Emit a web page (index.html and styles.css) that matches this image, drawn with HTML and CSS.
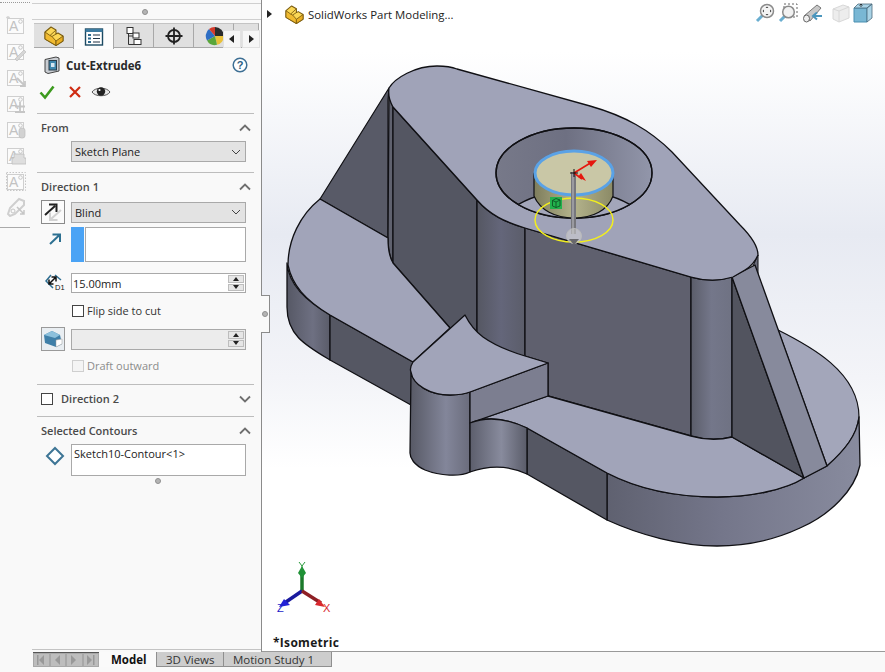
FILE: index.html
```html
<!DOCTYPE html>
<html lang="en">
<head>
<meta charset="utf-8">
<title>SolidWorks Part Modeling</title>
<link rel="stylesheet" href="styles.css">
</head>
<body>
<svg class="defs" width="0" height="0" aria-hidden="true">
  <defs>
    <symbol id="part" viewBox="0 0 20 20">
      <path d="M1 6 7 1 12 4V8L14 7 19 10V15L12 19.500 1 13Z" fill="#fbd756" stroke="#7a5c10" stroke-width="1.100" stroke-linejoin="round"/>
      <path d="M1 6 6 9.500 8 10.500 12 15V19.500L1 13Z" fill="#f0ba30" stroke="#7a5c10" stroke-width=".9" stroke-linejoin="round"/>
      <path d="M12 15 19 10V15L12 19.500Z" fill="#e9ae22" stroke="#7a5c10" stroke-width=".9" stroke-linejoin="round"/>
      <path d="M6 9.500 12 4M8 10.500 12 8" fill="none" stroke="#7a5c10" stroke-width=".9"/>
    </symbol>
    <symbol id="up" viewBox="0 0 12 8"><path d="M1 6.500 6 1.500 11 6.500" fill="none" stroke="#6f6f6f" stroke-width="1.800"/></symbol>
    <symbol id="down" viewBox="0 0 12 8"><path d="M1 1.500 6 6.500 11 1.500" fill="none" stroke="#6f6f6f" stroke-width="1.800"/></symbol>
    <symbol id="caret" viewBox="0 0 10 6"><path d="M1 1 5 5 9 1" fill="none" stroke="#444" stroke-width="1"/></symbol>
    <symbol id="railA" viewBox="0 0 20 20">
      <rect x="1.500" y="3.500" width="16" height="15" fill="#fbfbfb" stroke="#cfcfcf"/>
      <text x="3" y="16" font-family="Liberation Sans" font-size="14" fill="#c2c2c2">A</text>
      <circle cx="14.500" cy="6.500" r="1.800" fill="none" stroke="#c6c6c6"/>
    </symbol>
  </defs>
</svg>

<main class="app">
  <aside class="side">
    <nav class="rail">
      <div class="rail-top"></div>
      <svg class="rail-icon" viewBox="0 0 20 20"><use href="#railA"/><path d="M1 1 3 4M3 1 1 4M0 2.500H4" stroke="#cfcfcf" stroke-width=".8"/></svg>
      <svg class="rail-icon" viewBox="0 0 20 20"><use href="#railA"/><path d="M9 18 18 9 20 11 11 20Z" fill="#d6d6d6" stroke="#c0c0c0" stroke-width=".7"/></svg>
      <svg class="rail-icon" viewBox="0 0 20 20"><use href="#railA"/><path d="M11 11 19 19M14 19H19V14" fill="none" stroke="#c6c6c6" stroke-width="1.800"/></svg>
      <svg class="rail-icon" viewBox="0 0 20 20"><use href="#railA"/><path d="M14 9V18M9 13.500H19M9 19H19" stroke="#c6c6c6" stroke-width="1.800"/></svg>
      <svg class="rail-icon" viewBox="0 0 20 20"><use href="#railA"/><rect x="13" y="9" width="6" height="10" rx="2.500" fill="#d2d2d2" stroke="#bdbdbd" stroke-width=".7"/></svg>
      <svg class="rail-icon" viewBox="0 0 20 20"><use href="#railA"/><path d="M8 9H18V13H20V19H6V13H8Z" fill="#dedede" stroke="#bdbdbd" stroke-width=".8"/></svg>
      <svg class="rail-icon" viewBox="0 0 20 20"><use href="#railA"/><rect x=".5" y="1.500" width="19" height="18" fill="none" stroke="#c6c6c6" stroke-dasharray="1.500 1.500"/></svg>
      <svg class="rail-icon" viewBox="0 0 20 20"><path d="M2 17 4 11 13 2 18 4 18 8 9 17 4 19Z" fill="none" stroke="#cfcfcf" stroke-width="2"/><path d="M11 10 18 17M14 17H18V13" fill="none" stroke="#c6c6c6" stroke-width="1.500"/><circle cx="7" cy="14" r="2" fill="none" stroke="#c6c6c6"/></svg>
      <div class="rail-end"></div>
    </nav>

    <section class="pm">
      <div class="pm-grip"><span class="dot"></span></div>

      <div class="tabs">
        <div class="tab"><svg class="tab-icon" viewBox="0 0 20 20"><use href="#part"/></svg></div>
        <div class="tab tab-on">
          <svg class="tab-icon" viewBox="0 0 20 20">
            <rect x="1.500" y="2" width="17" height="16" fill="#fff" stroke="#1d4a63" stroke-width="1.400"/>
            <rect x="1.500" y="2" width="17" height="3" fill="#3d7ba0"/>
            <path d="M4 8h3M4 11.500h3M4 15h3" stroke="#2d6a8f" stroke-width="2"/>
            <path d="M9 8h7M9 11.500h7M9 15h7" stroke="#234" stroke-width="1.200"/>
          </svg>
        </div>
        <div class="tab">
          <svg class="tab-icon" viewBox="0 0 20 20" fill="#fff" stroke="#333">
            <rect x="3" y="1.500" width="6" height="6"/><rect x="9" y="7" width="6" height="5"/><rect x="10" y="13.500" width="7" height="5"/>
            <path d="M4.500 7.500V18.500H10M4.500 10H9" fill="none"/>
          </svg>
        </div>
        <div class="tab">
          <svg class="tab-icon" viewBox="0 0 20 20" fill="none" stroke="#222">
            <circle cx="10" cy="10" r="6" stroke-width="1.800"/>
            <path d="M10 1.500V18.500M1.500 10H18.500" stroke-width="1.800"/>
          </svg>
        </div>
        <div class="tab">
          <svg class="tab-icon tab-icon-pie" viewBox="0 0 20 20">
            <path d="M10 10V1A9 9 0 0 1 19 10Z" fill="#2b2b2b"/>
            <path d="M10 10H19A9 9 0 0 1 12 18.800Z" fill="#e9c13a"/>
            <path d="M10 10 12 18.800A9 9 0 0 1 2 14.500Z" fill="#5aa63a"/>
            <path d="M10 10 2 14.500A9 9 0 0 1 4 3Z" fill="#2f6fc4"/>
            <path d="M10 10 4 3A9 9 0 0 1 10 1Z" fill="#d33a2c"/>
          </svg>
        </div>
        <div class="tab tab-cut"></div>
        <div class="tab-scroll">
          <button class="scroll-btn"><svg width="6" height="8" viewBox="0 0 6 8"><path d="M5 0V8L0 4Z" fill="#222"/></svg></button>
          <button class="scroll-btn"><svg width="6" height="8" viewBox="0 0 6 8"><path d="M1 0V8L6 4Z" fill="#222"/></svg></button>
        </div>
      </div>

      <div class="title-row">
        <svg class="title-icon" viewBox="0 0 16 18">
          <path d="M1 3.500 12 1 15 2V15L4 17.500 1 16Z" fill="#c9cdd2" stroke="#444"/>
          <rect x="5" y="4.500" width="7.500" height="9.500" fill="#3e87ad" stroke="#2c3e4a"/>
          <rect x="7" y="7" width="3.500" height="4" fill="#d4e6f0"/>
        </svg>
        <h1 class="title">Cut-Extrude6</h1>
        <svg class="help" viewBox="0 0 16 16">
          <circle cx="8" cy="8" r="6.800" fill="#fff" stroke="#3d6f94" stroke-width="1.500"/>
          <text x="8" y="11.800" text-anchor="middle" font-family="Liberation Sans" font-weight="700" font-size="11" fill="#2d5f85">?</text>
        </svg>
      </div>

      <div class="actions">
        <svg class="act" viewBox="0 0 16 16"><path d="M1.500 8.500 6 13.500 14.500 2.500" fill="none" stroke="#3c9a1e" stroke-width="2.600"/></svg>
        <svg class="act act-x" viewBox="0 0 16 16"><path d="M3 3 13 13M13 3 3 13" fill="none" stroke="#cf2c13" stroke-width="2.200"/></svg>
        <svg class="act act-eye" viewBox="0 0 20 16">
          <path d="M1 8C4 3 16 3 19 8 16 13 4 13 1 8Z" fill="#e8e8e8" stroke="#555"/>
          <circle cx="10" cy="7.500" r="4.200" fill="#222"/><circle cx="8.500" cy="6" r="1.100" fill="#fff"/>
        </svg>
      </div>

      <section class="group group-from">
        <header class="group-head"><span class="group-label">From</span><svg class="chev"><use href="#up"/></svg></header>
        <div class="row row-sel">
          <span></span>
          <div class="select"><span>Sketch Plane</span><svg class="caret"><use href="#caret"/></svg></div>
        </div>
      </section>

      <section class="group group-dir1">
        <header class="group-head"><span class="group-label">Direction 1</span><svg class="chev"><use href="#up"/></svg></header>
        <div class="row row-end">
          <div class="icon-btn">
            <svg width="22" height="22" viewBox="0 0 22 22">
              <path d="M3 14 13 5M7 3.500H14.500V11" fill="none" stroke="#222" stroke-width="2"/>
              <path d="M19 9 9 18M15.500 19H8V11.500" fill="none" stroke="#d2d2d2" stroke-width="2"/>
            </svg>
          </div>
          <div class="select"><span>Blind</span><svg class="caret"><use href="#caret"/></svg></div>
        </div>
        <div class="row row-list">
          <div class="icon-cell">
            <svg width="14" height="14" viewBox="0 0 14 14"><path d="M2 12 12 2.500M4.500 2.500H12V10" fill="none" stroke="#2d7091" stroke-width="2"/></svg>
          </div>
          <div class="listpair"><span class="swatch"></span><span class="listbox"></span></div>
        </div>
        <div class="row row-spin">
          <div class="icon-cell">
            <svg width="20" height="20" viewBox="0 0 20 20">
              <path d="M10 2 16 7M6 2 1 8 8 15" fill="none" stroke="#2f6f92" stroke-width="1.500"/>
              <path d="M4 11 11 4M6.500 4H11V8.500M4 6.500V11H8.500" fill="none" stroke="#111" stroke-width="1.500"/>
              <text x="10" y="17" font-family="Liberation Sans" font-size="7.500" fill="#111">D1</text>
            </svg>
          </div>
          <div class="spin">
            <span class="spin-text">15.00mm</span>
            <span class="spin-btns"><i class="arr-up"></i><i class="arr-down"></i></span>
          </div>
        </div>
        <label class="row row-check">
          <span></span>
          <span class="check-line"><span class="check"></span><span class="check-text">Flip side to cut</span></span>
        </label>
        <div class="row row-end row-draft">
          <div class="icon-btn icon-btn-soft">
            <svg width="20" height="18" viewBox="0 0 20 18">
              <path d="M1 5 9 1 17 5 19 14 13 17 2 13Z" fill="#3f7fa8"/>
              <path d="M1 5 9 1 17 5 12 8Z" fill="#8cc0dc"/>
              <path d="M13 10 19 9 19 14 13 17Z" fill="#fff" stroke="#999" stroke-width=".5"/>
            </svg>
          </div>
          <div class="spin spin-off">
            <span class="spin-text"></span>
            <span class="spin-btns"><i class="arr-up"></i><i class="arr-down"></i></span>
          </div>
        </div>
        <div class="row row-check row-check-off">
          <span></span>
          <span class="check-line"><span class="check check-off"></span><span class="check-text check-text-off">Draft outward</span></span>
        </div>
      </section>

      <section class="group group-dir2">
        <header class="group-head">
          <span class="head-check"><span class="check"></span><span class="group-label">Direction 2</span></span>
          <svg class="chev"><use href="#down"/></svg>
        </header>
      </section>

      <section class="group group-cont">
        <header class="group-head"><span class="group-label">Selected Contours</span><svg class="chev"><use href="#up"/></svg></header>
        <div class="row row-contour">
          <div class="icon-cell">
            <svg width="20" height="20" viewBox="0 0 20 20"><path d="M10 2 18 10 10 18 2 10Z" fill="#fff" stroke="#3d7595" stroke-width="2"/></svg>
          </div>
          <div class="contour-box">Sketch10-Contour&lt;1&gt;</div>
        </div>
        <div class="end-grip"><span class="dot"></span></div>
      </section>
      <div class="pm-end"></div>
    </section>
  </aside>

  <section class="view">
    <svg class="model" viewBox="262 0 623 652" width="623" height="652">
      <defs>
        <linearGradient id="cylA" x1="0" x2="1" y1="0" y2="0"><stop offset="0" stop-color="#575965"/><stop offset=".6" stop-color="#83869a"/><stop offset="1" stop-color="#6a6c7c"/></linearGradient>
        <linearGradient id="cylB" x1="0" x2="1" y1="0" y2="0"><stop offset="0" stop-color="#5c5e6c"/><stop offset=".55" stop-color="#888b9d"/><stop offset="1" stop-color="#5a5c69"/></linearGradient>
        <linearGradient id="cylC" x1="0" x2="1" y1="0" y2="0"><stop offset="0" stop-color="#5b5d6a"/><stop offset=".5" stop-color="#74778a"/><stop offset="1" stop-color="#6f7283"/></linearGradient>
        <linearGradient id="cylD" x1="0" x2="1" y1="0" y2="0"><stop offset="0" stop-color="#555762"/><stop offset=".5" stop-color="#64667a"/><stop offset="1" stop-color="#5b5d6a"/></linearGradient>
        <linearGradient id="big" x1="0" x2="1" y1="0" y2="0"><stop offset="0" stop-color="#5f6170"/><stop offset=".45" stop-color="#74768a"/><stop offset="1" stop-color="#888b9e"/></linearGradient>
        <linearGradient id="left" x1="0" x2="1" y1="0" y2="0"><stop offset="0" stop-color="#565865"/><stop offset=".6" stop-color="#6e7082"/><stop offset="1" stop-color="#5a5c69"/></linearGradient>
        <linearGradient id="holeWall" x1="0" x2="1" y1="0" y2="0"><stop offset="0" stop-color="#777989"/><stop offset=".45" stop-color="#6e7082"/><stop offset="1" stop-color="#9296aa"/></linearGradient>
        <linearGradient id="pinWall" x1="0" x2="1" y1="0" y2="0"><stop offset="0" stop-color="#7e7d5c"/><stop offset=".5" stop-color="#b4b38c"/><stop offset="1" stop-color="#8b8a66"/></linearGradient>
        <clipPath id="holeClip"><ellipse cx="574" cy="173" rx="78" ry="45"/></clipPath>
      </defs>
      <g stroke="#101014" stroke-width="1.300" stroke-linejoin="round">
        <path d="M287 263C289 285 305 300 330 315V360C305 345 287 335 287 307Z" fill="url(#left)"/>
        <path d="M330 315 413 362 411 405 330 360Z" fill="#555763"/>

        <path d="M389 88 320 199 388 238V100Z" fill="#585a67" stroke-width="1.200"/>
        <path d="M389 90 393 107V263C389 256 388 250 388 238Z" fill="#5f616e"/>
        <path d="M393 107 477 200V345L450 328 393 263Z" fill="#545662"/>
        <path d="M477 200C490 215 505 222 525 228V360L477 340Z" fill="url(#cylD)"/>
        <path d="M525 228 691 277V436L548 396V363L525 356Z" fill="#5f606e"/>
        <path d="M691 277C705 281 720 281 732 277V437C720 440 705 440 691 436Z" fill="url(#cylC)"/>
        <path d="M753 266 758 255 758 278Z" fill="#6b6d7c" stroke-width="1"/>

        <path d="M778 330C810 346 859 372 859 417 857 435 845 450 827 466Z" fill="#a3a6ba" stroke-width="1.200"/>
        <path d="M607 473C640 490 680 497 717 497 750 497 785 490 804 478L827 466C845 450 857 435 859 417L860 465C855 490 830 515 800 528 770 542 740 546 717 546 680 546 640 535 607 520Z" fill="url(#big)"/>
        <path d="M527 428 607 473V520L527 474Z" fill="#555763"/>

        <path d="M320 199C300 215 288 240 288 265 292 285 305 300 330 315L413 362 450 328 393 263C390 258 388 252 388 238Z" fill="#a1a4b9"/>
        <path d="M470 423 548 396 691 436C705 440 720 440 732 437L804 478C785 490 750 497 717 497 680 497 640 490 607 473L527 428C510 420 490 415 470 423Z" fill="#a1a4b9"/>

        <path d="M732 277 804 478 732 437Z" fill="#52545f"/>
        <path d="M732 277 755 265 827 466 804 478Z" fill="#878a9c"/>

        <path d="M411 372C413 385 430 395 450 395 458 395 465 394 470 392V472C460 477 440 476 425 470 414 465 410 458 410 453Z" fill="url(#cylA)"/>
        <path d="M470 392 548 363V396L470 423Z" fill="#7c7e90"/>
        <path d="M470 423C490 415 510 420 527 428V474C510 466 490 465 470 472Z" fill="url(#cylB)"/>
        <path d="M465 315 413 362C410 367 410 370 411 372 413 385 430 395 450 395 458 395 465 394 470 392L548 363 525 356C505 350 490 342 483 337 475 331 469 323 465 315Z" fill="#a1a4b9"/>

        <path d="M389 88C395 78 415 66 437 66 445 66 452 67 457 69L590 106C625 116 650 130 672 152L740 225C750 235 758 245 758 255 755 262 750 267 745 270L733 277C720 281 705 281 691 277L525 228C505 222 490 215 477 200L393 107C390 102 388 95 389 88Z" fill="#a0a3b8"/>

        <ellipse cx="574" cy="173" rx="78" ry="45" fill="url(#holeWall)"/>
        <g clip-path="url(#holeClip)">
          <ellipse cx="574" cy="236" rx="78" ry="45" fill="#a3a6ba"/>
        </g>
        <ellipse cx="574" cy="173" rx="78" ry="45" fill="none"/>

        <path d="M534 173V196C540 210 555 218 574 218 593 218 608 210 613 196V173Z" fill="url(#pinWall)" stroke-width="1.200"/>
      </g>
      <ellipse class="pin-top" cx="574" cy="173" rx="39" ry="22"/>
      <ellipse class="yellow-ring" cx="574" cy="220" rx="39" ry="22"/>
      <rect x="571" y="172" width="5" height="62" fill="#77777d"/>
      <rect x="572" y="172" width="2" height="62" fill="#9a9aa0"/>
      <circle cx="574" cy="236" r="7.500" fill="#d4d4d4" fill-opacity=".55" stroke="#bbb"/>
      <path d="M569 239H579L574 245Z" fill="#68686c"/>
      <path d="M574 173 592 162M574 173 582 179" stroke="#e5170e" stroke-width="1.600"/>
      <path d="M597 160 587 161 591 167ZM586 181 578 177 581 173Z" fill="#e5170e"/>
      <path d="M570 173H578M574 169V177" stroke="#111" stroke-width="1"/>
      <rect x="550" y="197" width="12" height="12" fill="#22b14c"/>
      <path d="M552.500 200.500 556 198.500 560 200 560 206 556 207.500 552.500 206ZM552.500 200.500 556 202 560 200M556 202V207.500" fill="none" stroke="#0b4a20" stroke-width=".8"/>
    </svg>

    <div class="crumb">
      <svg width="6" height="8" viewBox="0 0 6 8"><path d="M0 0V8L5 4Z" fill="#222"/></svg>
      <svg class="crumb-part" viewBox="0 0 20 20"><use href="#part"/></svg>
      <span class="crumb-text">SolidWorks Part Modeling...</span>
    </div>

    <div class="hud">
      <svg class="hud-icon" viewBox="0 0 20 20">
        <path d="M2 18 8 12" stroke="#6aaed0" stroke-width="3"/>
        <circle cx="12" cy="8" r="6.500" fill="#f4f4f4" stroke="#8b8b8b" stroke-width="1.500"/>
        <path d="M12 3.500 13.500 5H10.500ZM12 12.500 13.500 11H10.500ZM7.500 8 9 6.500V9.500ZM16.500 8 15 6.500V9.500Z" fill="#444"/>
      </svg>
      <svg class="hud-icon hud-2" viewBox="0 0 20 20">
        <rect x="6" y="1" width="13" height="13" fill="none" stroke="#666" stroke-dasharray="2 2"/>
        <path d="M2 18 7 13" stroke="#6aaed0" stroke-width="3"/>
        <circle cx="10.500" cy="9" r="5.800" fill="#f2f2f2" stroke="#8b8b8b" stroke-width="1.500"/>
      </svg>
      <svg class="hud-icon hud-3" viewBox="0 0 20 20">
        <path d="M1 13 14 2 18 5 7 18Z" fill="#c8c8c8" stroke="#777"/>
        <ellipse cx="3.500" cy="15.500" rx="3" ry="3.500" fill="#eee" stroke="#666"/>
        <path d="M19 13H11M14 9.500 10 13 14 16.500" fill="none" stroke="#4b96bd" stroke-width="2"/>
      </svg>
      <svg class="hud-icon hud-4" viewBox="0 0 20 20">
        <path d="M2 6 12 2 18 4V15L8 19 2 16Z" fill="#ededed" stroke="#d8d8d8"/>
        <path d="M8 8V19M8 8 18 4M2 6 8 8" fill="none" stroke="#d8d8d8"/>
      </svg>
      <svg class="hud-icon hud-5" viewBox="0 0 20 20">
        <path d="M1 5H14V19H1Z" fill="#79b7d4" stroke="#4b8fb1"/>
        <path d="M1 5 5 1H19L14 5ZM14 5 19 1V15L14 19Z" fill="#a9d3e6" stroke="#4b6b7c" stroke-width=".8"/>
        <path d="M8 1V4M6.500 2.500 8 1 9.500 2.500" fill="none" stroke="#222" stroke-width=".8"/>
      </svg>
    </div>

    <svg class="triad" viewBox="0 0 70 62">
      <path d="M28 30V10" stroke="#1b7a2b" stroke-width="3.500"/>
      <path d="M28 5 32 12 28 17 24 12Z" fill="#1f9136"/>
      <path d="M28 30 9 43" stroke="#1a1a9e" stroke-width="3.500"/>
      <path d="M5 46 10 38 16 44Z" fill="#2222d8"/>
      <path d="M28 30 47 42" stroke="#8e1f25" stroke-width="3.500"/>
      <path d="M51 46 41 44 45 38Z" fill="#d8282e"/>
      <path d="M25 1 28 5 31 1M28 5V9" fill="none" stroke="#2a9a3c"/>
      <text class="axis-z" x="3" y="51">Z</text>
      <text class="axis-x" x="49" y="51">X</text>
    </svg>
    <div class="iso">*Isometric</div>
  </section>

  <footer class="bottom">
    <div class="nav-btns">
      <button class="nav"><svg width="8" height="10" viewBox="0 0 8 10"><path d="M0 0H1.500V10H0ZM7 0V10L2 5Z" fill="#999"/></svg></button>
      <button class="nav"><svg width="6" height="10" viewBox="0 0 6 10"><path d="M5 0V10L0 5Z" fill="#999"/></svg></button>
      <button class="nav"><svg width="6" height="10" viewBox="0 0 6 10"><path d="M0 0V10L5 5Z" fill="#999"/></svg></button>
      <button class="nav"><svg width="8" height="10" viewBox="0 0 8 10"><path d="M0 0V10L5 5ZM6 0H7.500V10H6Z" fill="#999"/></svg></button>
    </div>
    <div class="btab btab-on">Model</div>
    <div class="btab btab-3d">3D Views</div>
    <div class="btab btab-motion">Motion Study 1</div>
  </footer>

  <div class="side-handle"><span class="dot"></span></div>
</main>
</body>
</html>
```

FILE: styles.css
```css
* { box-sizing: border-box; }
html, body { margin: 0; padding: 0; }
body {
  width: 885px;
  height: 672px;
  overflow: hidden;
  background: #f9f9f9;
  color: #222;
  font-family: "Open Sans", "Noto Sans", sans-serif;
  font-size: 11px;
}
.defs { display: block; height: 0; }

.app {
  position: relative;
  display: grid;
  grid-template-columns: 262px 623px;
  grid-template-rows: 652px 20px;
  width: 885px;
  height: 672px;
}

/* left column */
.side { display: flex; border-right: 1px solid #8b8b8b; background: #f9f9f9; }
.rail { width: 32px; flex: none; display: flex; flex-direction: column; align-items: flex-start; padding-left: 6px; }
.rail-top { width: 30px; height: 13px; margin-left: -6px; border-top: 1px dotted #999; margin-top: 2px; }
.rail-icon { display: block; width: 20px; height: 20px; margin-bottom: 6px; flex: none; }
.rail-end { width: 30px; margin-left: -6px; margin-top: 4px; border-top: 1px solid #aaa; }

.pm { width: 229px; flex: none; display: flex; flex-direction: column; }
.pm-grip {
  height: 17px;
  margin-top: 3px;
  border-top: 1px solid #cfcfcf;
  border-bottom: 1px solid #cfcfcf;
  display: flex;
  align-items: center;
  justify-content: center;
  padding-right: 4px;
}
.pm-end { margin-top: auto; margin-bottom: 2px; border-bottom: 1px solid #c4c4c4; }
.dot {
  display: block;
  width: 6px;
  height: 6px;
  border-radius: 50%;
  background: #b4b4b4;
  border: 1px solid #909090;
}

/* tabs */
.tabs { position: relative; display: flex; height: 26px; margin-top: 3px; padding-left: 2px; overflow: hidden; flex: none; }
.tab {
  width: 40px;
  height: 25px;
  flex: none;
  display: flex;
  align-items: center;
  justify-content: center;
  background: #e0e0e0;
  border-right: 1px solid #a8a8a8;
  border-top: 1px solid #c4c4c4;
  border-bottom: 1px solid #a8a8a8;
}
.tab-on { background: #fdfdfd; height: 26px; border-bottom: 0; border-left: 1px solid #a8a8a8; margin-left: -1px; width: 41px; }
.tab-cut { width: 25px; }
.tab-icon { width: 20px; height: 20px; }
.tab-icon-pie { margin-right: -3px; }
.tab-scroll { position: absolute; left: 191px; top: 7px; display: flex; gap: 1px; }
.scroll-btn {
  width: 18px;
  height: 18px;
  padding: 0;
  display: flex;
  align-items: center;
  justify-content: center;
  background: #f6f6f6;
  border: 1px solid #e2e2e2;
}

/* title */
.title-row { height: 32px; display: flex; align-items: center; padding-left: 12px; flex: none; }
.title-icon { width: 16px; height: 18px; flex: none; }
.title { margin: 0 0 0 6px; font-size: 11.500px; font-weight: 700; color: #2a2a2a; flex: none; width: 160px; }
.help { width: 16px; height: 16px; flex: none; margin-left: 6px; }

.actions { height: 22px; display: flex; align-items: center; padding-left: 7px; flex: none; }
.act { width: 16px; height: 16px; flex: none; }
.act-x { margin-left: 12px; }
.act-eye { width: 20px; margin-left: 8px; }

/* groups */
.group { width: 217px; margin-left: 5px; border-top: 1px solid #bdbdbd; flex: none; }
.group-from { margin-top: 10px; height: 59px; }
.group-dir1 { height: 212px; }
.group-dir2 { height: 32px; }
.group-cont { height: 70px; }

.group-head {
  height: 27px;
  display: flex;
  align-items: center;
  justify-content: space-between;
  padding: 0 3px 0 4px;
}
.group-label { font-size: 11px; font-weight: 600; color: #4a4a4a; }
.chev { width: 12px; height: 8px; flex: none; }

.head-check { display: flex; align-items: center; gap: 8px; }

.row { display: grid; grid-template-columns: 34px 175px; align-items: center; }
.row-sel { height: 21px; }
.row-end { height: 24px; }
.row-list { height: 35px; margin-top: 3px; align-items: start; }
.row-spin { height: 20px; margin-top: 11px; }
.row-check { height: 12px; margin-top: 12px; line-height: 12px; grid-template-rows: 12px; }
.row-draft { margin-top: 10px; }
.row-check-off { margin-top: 9px; }
.row-contour { height: 32px; align-items: start; }

.select {
  height: 21px;
  display: flex;
  align-items: center;
  justify-content: space-between;
  padding: 0 4px 0 3px;
  background: #e3e3e3;
  border: 1px solid #a9a9a9;
  font-size: 11px;
  color: #222;
}
.caret { width: 10px; height: 6px; }

.icon-btn {
  width: 24px;
  height: 24px;
  margin-left: 4px;
  display: flex;
  align-items: center;
  justify-content: center;
  background: #fbfbfb;
  border: 1px solid #8a8a8a;
}
.icon-btn-soft { background: #e9eef2; border-color: #9a9a9a; }
.icon-cell { display: flex; justify-content: center; align-items: center; padding-left: 4px; width: 32px; }
.row-list .icon-cell { padding-top: 5px; }
.row-contour .icon-cell { padding-top: 2px; }

.listpair { display: flex; height: 35px; gap: 1px; }
.swatch { width: 13px; background: #4aa3f5; }
.listbox { flex: 1; background: #fff; border: 1px solid #a9a9a9; }

.spin {
  height: 20px;
  display: flex;
  align-items: center;
  justify-content: space-between;
  padding: 0 1px 0 1px;
  background: #fff;
  border: 1px solid #a9a9a9;
  font-size: 11px;
}
.spin-off { height: 21px; background: #ececec; }
.spin-btns { width: 16px; height: 16px; display: flex; flex-direction: column; gap: 1px; }
.spin-btns i { flex: 1; display: flex; align-items: center; justify-content: center; background: #e6e6e6; border: 1px solid #bdbdbd; }
.arr-up::before { content: ""; border: 3px solid transparent; border-top: 0; border-bottom: 4px solid #222; }
.arr-down::before { content: ""; border: 3px solid transparent; border-bottom: 0; border-top: 4px solid #222; }

.check-line { display: flex; align-items: center; gap: 3px; padding-left: 1px; height: 12px; }
.check { display: block; width: 12px; height: 12px; background: #fff; border: 1px solid #444; flex: none; }
.check-off { background: #f4f4f4; border-color: #cfcfcf; }
.check-text { font-size: 11px; color: #333; }
.check-text-off { color: #8c8c8c; }

.contour-box { height: 32px; padding: 0 2px; background: #fff; border: 1px solid #a9a9a9; font-size: 11px; line-height: 17px; }
.end-grip { display: flex; justify-content: center; margin-top: 2px; padding-left: 25px; }

/* graphics view */
.view {
  position: relative;
  overflow: hidden;
  background: linear-gradient(180deg, #fff 0, #fff 8%, #e7eaf2 36%, #f3f4f8 58%, #fff 72%);
  border-bottom: 1px solid #9a9a9a;
}
.model { display: block; }
.pin-top { fill: #c9c7a6; stroke: #5aa2e6; stroke-width: 3; }
.yellow-ring { fill: none; stroke: #f2ee1e; stroke-width: 1.500; }

.crumb { position: absolute; left: 5px; top: 5px; display: flex; align-items: center; height: 18px; }
.crumb-part { width: 19px; height: 19px; margin-left: 12px; }
.crumb-text { margin-left: 4px; font-size: 11.400px; color: #222; }

.hud { position: absolute; left: 493px; top: 3px; display: flex; }
.hud-icon { width: 20px; height: 20px; flex: none; }
.hud-2 { margin-left: 3px; }
.hud-3 { margin-left: 5px; }
.hud-4 { margin-left: 8px; }
.hud-5 { margin-left: 2px; }

.triad { position: absolute; left: 12px; top: 561px; width: 70px; height: 62px; }
.axis-z { font: 11px "Liberation Sans", sans-serif; fill: #2222c8; }
.axis-x { font: 11px "Liberation Sans", sans-serif; fill: #d8282e; }
.iso { position: absolute; left: 11px; top: 634px; font-size: 12px; font-weight: 700; color: #1a1a1a; letter-spacing: .3px; }

/* bottom tabs */
.bottom { grid-column: 1 / 3; display: flex; align-items: flex-start; padding-left: 33px; }
.nav-btns { display: flex; width: 66px; height: 15px; background: #b4b4b4; border-top: 1px solid #555; }
.nav { flex: 1; padding: 0; display: flex; align-items: center; justify-content: center; background: #bdbdbd; border: 1px solid #a8a8a8; }
.btab { height: 15px; display: flex; align-items: center; font-size: 11.500px; }
.btab-on { width: 57px; padding-left: 12px; font-weight: 700; color: #111; background: #fafafa; }
.btab-3d { width: 68px; padding-left: 9px; background: #cdcdcd; border: 1px solid #8f8f8f; border-top: 0; color: #333; }
.btab-motion { width: 108px; padding-left: 9px; background: #cdcdcd; border: 1px solid #8f8f8f; border-top: 0; border-left: 0; color: #333; }

.side-handle {
  position: absolute;
  left: 261px;
  top: 295px;
  width: 9px;
  height: 38px;
  display: flex;
  align-items: center;
  justify-content: center;
  background: #f9f9f9;
  border: 1px solid #8b8b8b;
  border-left: 0;
}
```
